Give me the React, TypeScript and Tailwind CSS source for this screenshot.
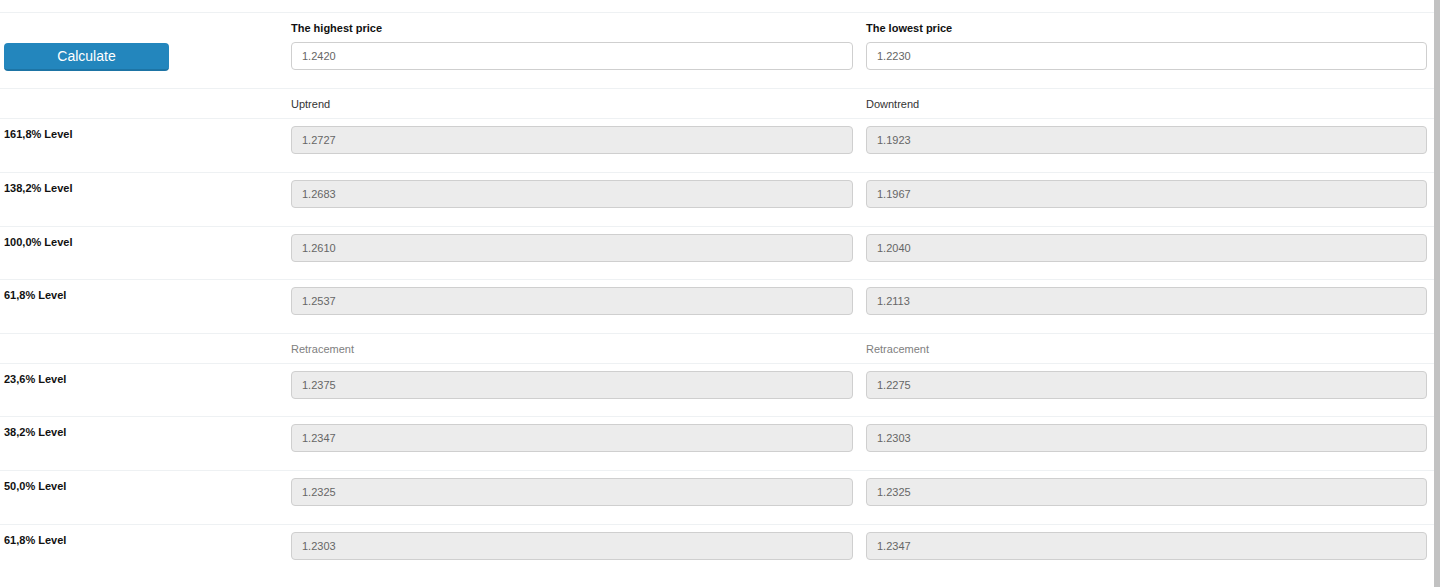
import React from "react";

const font = { fontFamily: '"Liberation Sans", Arial, sans-serif' };

function Field({ value, readOnly = true }: { value: string; readOnly?: boolean }) {
  return (
    <div
      className={`h-[28px] w-full rounded-[4px] border border-[#cfcfcf] pl-[10px] flex items-center text-[11px] text-[#666] ${
        readOnly ? "bg-[#ececec]" : "bg-white"
      }`}
    >
      {value}
    </div>
  );
}

type Lv = { label: string; up: string; down: string; h: string };

const ext: Lv[] = [
  { label: "161,8% Level", up: "1.2727", down: "1.1923", h: "h-[54px]" },
  { label: "138,2% Level", up: "1.2683", down: "1.1967", h: "h-[54px]" },
  { label: "100,0% Level", up: "1.2610", down: "1.2040", h: "h-[53px]" },
  { label: "61,8% Level", up: "1.2537", down: "1.2113", h: "h-[54px]" },
];
const ret: Lv[] = [
  { label: "23,6% Level", up: "1.2375", down: "1.2275", h: "h-[53px]" },
  { label: "38,2% Level", up: "1.2347", down: "1.2303", h: "h-[54px]" },
  { label: "50,0% Level", up: "1.2325", down: "1.2325", h: "h-[54px]" },
  { label: "61,8% Level", up: "1.2303", down: "1.2347", h: "h-[63px]" },
];

function LevelRow({ r }: { r: Lv }) {
  return (
    <div className={`flex border-t border-[#eef1f3] ${r.h}`}>
      <div className="w-[291px] pl-[4px] pt-[7px] text-[11px] font-bold text-[#111]">{r.label}</div>
      <div className="w-[562px] pt-[7px]">
        <Field value={r.up} />
      </div>
      <div className="w-[561px] ml-[13px] pt-[7px]">
        <Field value={r.down} />
      </div>
    </div>
  );
}

function HeadRow({ a, b, color }: { a: string; b: string; color: string }) {
  return (
    <div className={`flex h-[30px] border-t border-[#eef1f3] items-center text-[11px] ${color}`}>
      <div className="w-[291px]" />
      <div className="w-[562px] pt-[1px]">{a}</div>
      <div className="w-[561px] ml-[13px] pt-[1px]">{b}</div>
    </div>
  );
}

export default function App() {
  return (
    <div className="flex w-[1440px] h-[587px] bg-white overflow-hidden" style={font}>
      <div className="w-[1434px] pt-[12px]">
        <div className="flex h-[76px] border-t border-[#eef1f3]">
          <div className="w-[291px] pl-[4px] pt-[30px]">
            <button className="w-[165px] h-[28px] rounded-[4px] bg-[#2386bd] border-b-2 border-[#1d74a5] text-white text-[14px] flex items-center justify-center">
              Calculate
            </button>
          </div>
          <div className="w-[562px] pt-[7px]">
            <div className="text-[11px] font-bold text-[#111] h-[22px]">The highest price</div>
            <Field value="1.2420" readOnly={false} />
          </div>
          <div className="w-[561px] ml-[13px] pt-[7px]">
            <div className="text-[11px] font-bold text-[#111] h-[22px]">The lowest price</div>
            <Field value="1.2230" readOnly={false} />
          </div>
        </div>
        <HeadRow a="Uptrend" b="Downtrend" color="text-[#333]" />
        {ext.map((r, i) => (
          <LevelRow key={"e" + i} r={r} />
        ))}
        <HeadRow a="Retracement" b="Retracement" color="text-[#808080]" />
        {ret.map((r, i) => (
          <LevelRow key={"r" + i} r={r} />
        ))}
      </div>
      <div className="w-[6px] bg-[#c2c2c2]" />
    </div>
  );
}
